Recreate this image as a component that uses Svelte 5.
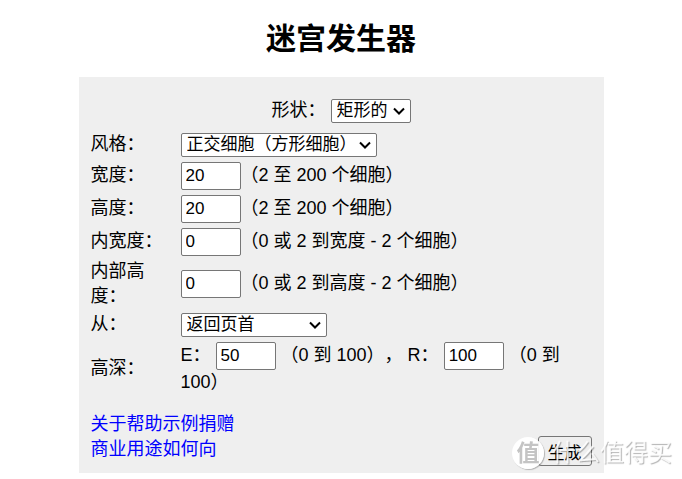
<script lang="ts">
  interface SizeRow {
    id: string
    label: string
    value: string
    hint: string
  }

  let shape = $state('矩形的')
  let style = $state('正交细胞（方形细胞）')
  let startAt = $state('返回页首')
  let e = $state('50')
  let r = $state('100')

  let sizes: SizeRow[] = $state([
    { id: 'width', label: '宽度：', value: '20', hint: '（2 至 200 个细胞）' },
    { id: 'height', label: '高度：', value: '20', hint: '（2 至 200 个细胞）' },
    { id: 'inner-width', label: '内宽度：', value: '0', hint: '（0 或 2 到宽度 - 2 个细胞）' },
    { id: 'inner-height', label: '内部高度：', value: '0', hint: '（0 或 2 到高度 - 2 个细胞）' }
  ])
</script>

<main lang="zh-CN">
  <h1>迷宫发生器</h1>

  <form class="panel" onsubmit={(ev) => ev.preventDefault()}>
    <div class="shape">
      <label for="shape">形状：</label>
      <select id="shape" class="select-short" bind:value={shape}>
        <option>矩形的</option>
      </select>
    </div>

    <table>
      <tbody>
        <tr class="row-select">
          <th scope="row"><label for="style">风格：</label></th>
          <td>
            <select id="style" class="select-long" bind:value={style}>
              <option>正交细胞（方形细胞）</option>
            </select>
          </td>
        </tr>
        {#each sizes as row (row.id)}
          <tr class="row-input">
            <th scope="row"><label for={row.id}>{row.label}</label></th>
            <td><input id={row.id} type="text" bind:value={row.value} />{row.hint}</td>
          </tr>
        {/each}
        <tr class="row-select">
          <th scope="row"><label for="start">从：</label></th>
          <td>
            <select id="start" class="select-medium" bind:value={startAt}>
              <option>返回页首</option>
            </select>
          </td>
        </tr>
        <tr class="row-depth">
          <th scope="row">高深：</th>
          <td>
            <label for="e">E：</label> <input id="e" type="text" bind:value={e} /> <span>（0 到 100），</span> <label for="r">R：</label> <input id="r" type="text" bind:value={r} /> <span>（0 到 100）</span>
          </td>
        </tr>
      </tbody>
    </table>

    <footer>
      <nav>
        <div><a href="#about">关于</a><a href="#help">帮助</a><a href="#examples">示例</a><a href="#donate">捐赠</a></div>
        <div><a href="#commercial">商业用途</a><a href="#howto">如何向</a></div>
      </nav>
      <button type="submit">生成</button>
    </footer>
  </form>

  <div class="watermark">
    <span class="badge">值</span>
    <span>什么值得买</span>
  </div>
</main>

<style>
  :global(body) {
    background: #fff;
  }

  main {
    padding: 16px;
    font-family: "Liberation Sans", "Noto Sans CJK SC", sans-serif;
    font-size: 18px;
    line-height: 25px;
    color: #000;
    text-spacing-trim: space-all;
  }

  h1 {
    margin: 0 0 16px;
    font-size: 30px;
    line-height: 45px;
    text-align: center;
  }

  .panel {
    box-sizing: border-box;
    max-width: 525px;
    margin: 0 auto;
    padding: 21px 12px 7px;
    background: #efefef;
  }

  .shape {
    margin-bottom: 7px;
    text-align: center;
  }

  table {
    width: 100%;
    border-collapse: collapse;
  }

  th,
  td {
    padding: 1px 0;
    font-weight: normal;
    text-align: left;
    vertical-align: middle;
  }
  th {
    width: 90px;
    box-sizing: border-box;
  }
  th label {
    display: block;
    max-width: 80px;
  }

  .row-select { height: 29px; }
  .row-input { height: 33px; }
  .row-depth td { padding: 3px 0; }

  input,
  select,
  button {
    box-sizing: border-box;
    margin: 0;
    font-family: inherit;
    font-size: 17px;
    color: #000;
    border: 1px solid #767676;
    vertical-align: middle;
  }
  input {
    width: 60px;
    height: 28px;
    padding: 1px 4px;
    background: #fff;
    border-radius: 2px;
  }
  select {
    appearance: none;
    height: 24px;
    padding: 0 0 0 5px;
    line-height: 22px;
    background: #fff url("data:image/svg+xml,%3Csvg xmlns='http://www.w3.org/2000/svg' width='12' height='8' fill='none' stroke='%23000' stroke-width='2'%3E%3Cpath d='M1 1.5 6 6.5 11 1.5'/%3E%3C/svg%3E") no-repeat right 5px center;
    border-radius: 2px;
  }
  .select-short { width: 80px; }
  .select-medium { width: 146px; }
  .select-long { width: 196px; }

  footer {
    display: flex;
    justify-content: space-between;
    align-items: flex-end;
    margin-top: 14px;
  }
  nav {
    padding-bottom: 4px;
  }

  a {
    color: #00f;
    text-decoration: none;
  }

  button {
    height: 30px;
    padding: 0 9px;
    background: #efefef;
    border-radius: 3px;
  }

  .watermark {
    position: fixed;
    right: 10px;
    bottom: 10px;
    display: flex;
    align-items: center;
    gap: 8px;
    font-size: 24px;
    line-height: 32px;
    color: rgba(255, 255, 255, 0.85);
    text-shadow: 1px 1px 1px rgba(0, 0, 0, 0.3);
    pointer-events: none;
  }
  .badge {
    width: 32px;
    height: 32px;
    border-radius: 50%;
    background: rgba(255, 255, 255, 0.95);
    box-shadow: 1px 1px 1px rgba(0, 0, 0, 0.25);
    font-size: 23px;
    font-weight: bold;
    color: #c4c4c4;
    text-align: center;
    text-shadow: none;
  }
</style>
